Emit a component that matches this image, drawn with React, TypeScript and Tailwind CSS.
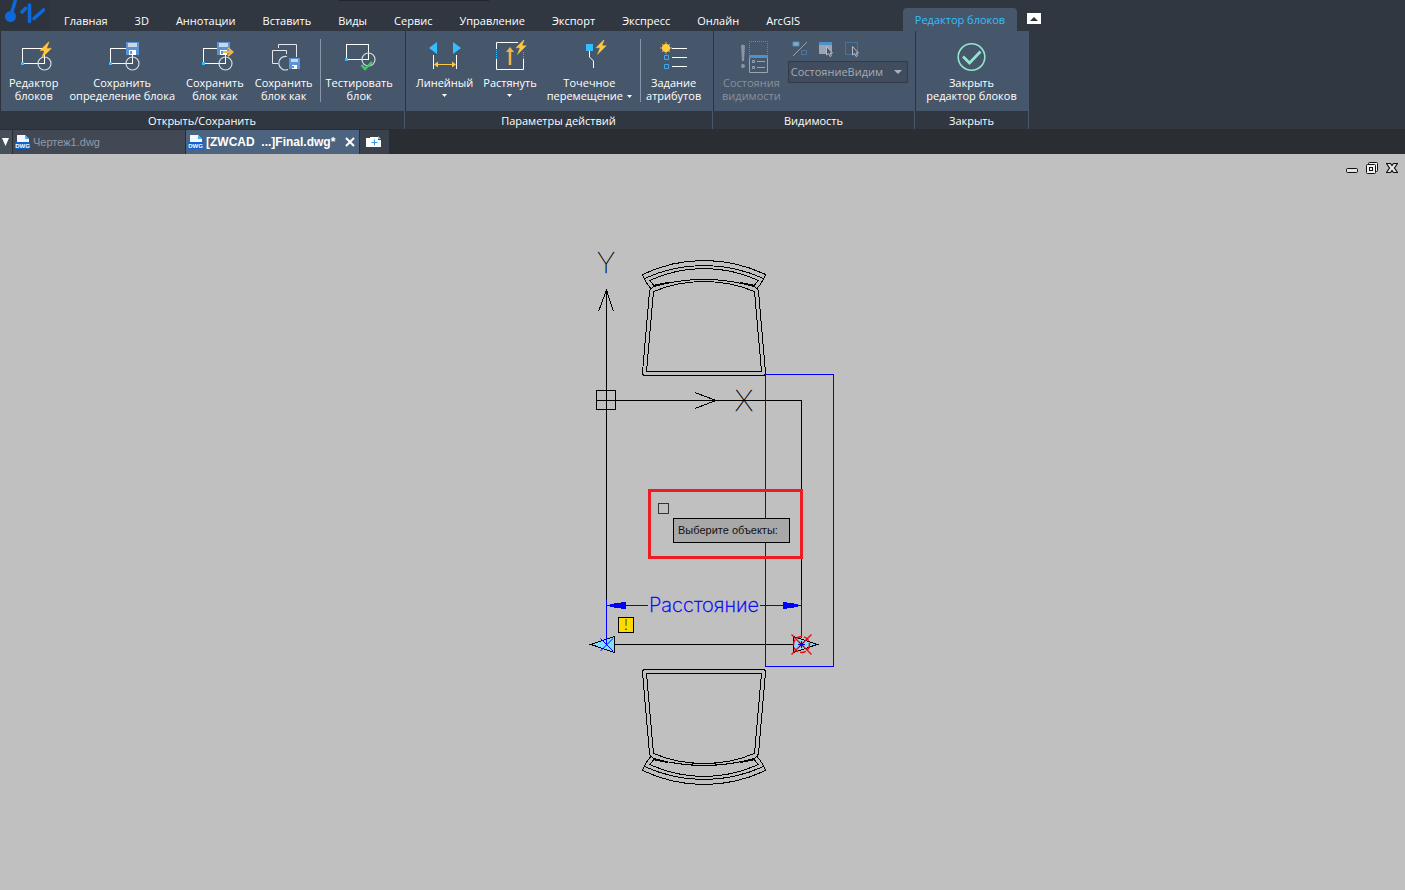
import type { ReactNode } from "react";

const menuItems = [
  "Главная",
  "3D",
  "Аннотации",
  "Вставить",
  "Виды",
  "Сервис",
  "Управление",
  "Экспорт",
  "Экспресс",
  "Онлайн",
  "ArcGIS",
];

function Icon({ children }: { children: ReactNode }) {
  return (
    <svg viewBox="0 0 40 37" className="h-[37px] w-10 shrink-0" fill="none" aria-hidden="true">
      {children}
    </svg>
  );
}

function Bolt({ x, y }: { x: number; y: number }) {
  return (
    <path
      transform={`translate(${x} ${y})`}
      d="M8.5 0 0 8.6h4.6L1.6 16 11.4 6.4H6.6L9 0Z"
      fill="#ffc83d"
      stroke="#ffc83d"
      strokeWidth=".5"
    />
  );
}

function Floppy({ x, y, size = 13 }: { x: number; y: number; size?: number }) {
  return (
    <g transform={`translate(${x} ${y}) scale(${size / 13})`} shapeRendering="crispEdges">
      <rect width="13" height="13" fill="#5b94d6" />
      <rect x="2" y="1" width="9" height="4" fill="#c9d6e6" />
      <rect x="3" y="8" width="7" height="5" fill="#fff" />
      <rect x="4" y="9" width="2" height="3" fill="#5b94d6" />
    </g>
  );
}

function BlockShape({ x, y, right }: { x: number; y: number; right: number }) {
  return (
    <>
      <path d={`M${x + 0.5} ${y + 15.5}V${y + 0.5}H${right + 0.5}V${y + 15.5}Z`} stroke="#fff" shapeRendering="crispEdges" />
      <circle cx={right + 0.5} cy={y + 15.5} r="6.5" stroke="#d5dae0" strokeWidth="1.2" />
      <rect x={x - 1} y={y + 14} width="3" height="3" fill="#36bdff" />
    </>
  );
}

function Tool({
  icon,
  label,
  disabled,
  arrow,
}: {
  icon: ReactNode;
  label: string;
  disabled?: boolean;
  arrow?: "below" | "inline";
}) {
  return (
    <button
      type="button"
      disabled={disabled}
      className={`flex flex-col items-center pt-2 text-[11px] leading-[13px] ${
        disabled ? "text-[#87909b]" : "text-white"
      }`}
    >
      <Icon>{icon}</Icon>
      <span className="whitespace-pre">
        {label}
        {arrow === "inline" && <Caret className="mb-[2px] ml-1 inline-block h-[3px] w-[5px]" />}
      </span>
      {arrow === "below" && <Caret className="mt-[5px] h-[3px] w-[5px]" />}
    </button>
  );
}

function Caret({ className }: { className: string }) {
  return (
    <svg viewBox="0 0 5 3" className={className} aria-hidden="true">
      <path d="M0 0h5L2.5 3Z" fill="currentColor" />
    </svg>
  );
}

function Divider() {
  return <span className="mt-2 h-[63px] w-px bg-[#8796a8]" />;
}

function Panel({ title, width, children }: { title: string; width: string; children: ReactNode }) {
  return (
    <section className={`flex shrink-0 flex-col ${width}`} aria-label={title}>
      <div className="flex h-20 items-start border-l border-[#2d343e] bg-[#47576b]">{children}</div>
      <h2 className="flex h-[18px] items-center justify-center border-r border-[#47576b] bg-[#313741] pt-[2px] text-[11px] text-white">
        {title}
      </h2>
    </section>
  );
}

function DwgIcon() {
  return (
    <svg viewBox="0 0 16 16" className="h-4 w-4 shrink-0" aria-hidden="true">
      <path d="M2 1h8l4 4v10H2Z" fill="#f4f8fc" />
      <path d="M10 1l4 4h-4Z" fill="#3fb4f0" />
      <rect x="0" y="8" width="15" height="7" rx="1" fill="#0f62cf" />
      <text x="7.500" y="14" textAnchor="middle" fontSize="6" fontWeight="700" fill="#fff" fontFamily="Liberation Sans, sans-serif">
        DWG
      </text>
    </svg>
  );
}

function Ribbon() {
  return (
    <div className="flex">
      <Panel title="Открыть/Сохранить" width="w-[405px]">
        <div className="flex gap-[7px] pl-2">
          <div className="flex gap-[11px]">
            <Tool
              label={"Редактор\nблоков"}
              icon={
                <>
                  <BlockShape x={8} y={9} right={30} />
                  <Bolt x={26} y={3} />
                </>
              }
            />
            <Tool
              label={"Сохранить\nопределение блока"}
              icon={
                <>
                  <BlockShape x={8} y={9} right={30} />
                  <Floppy x={24} y={3} />
                </>
              }
            />
            <Tool
              label={"Сохранить\nблок как"}
              icon={
                <>
                  <BlockShape x={8} y={9} right={30} />
                  <Floppy x={22} y={3} />
                  <path d="M28 13h9M33 9l4.500 4L33 17" stroke="#eeb54a" strokeWidth="2" />
                </>
              }
            />
            <Tool
              label={"Сохранить\nблок как"}
              icon={
                <>
                  <path d="M14.500 9V5.500H32.500V18" stroke="#e4e8ec" />
                  <path d="M22.500 15V11.500H8.500V24.500H14" stroke="#e4e8ec" />
                  <path d="M23 17.500A6.800 6.800 0 1 0 24 30.500" stroke="#d5dae0" strokeWidth="1.200" />
                  <Floppy x={25} y={19} size={11} />
                </>
              }
            />
          </div>
          <div className="flex gap-[5px]">
            <Divider />
            <Tool
              label={"Тестировать\nблок"}
              icon={
                <>
                  <BlockShape x={7} y={5} right={29} />
                  <path d="m22.500 26 3.500 4 7-7" stroke="#45c964" strokeWidth="2.400" />
                </>
              }
            />
          </div>
        </div>
      </Panel>

      <Panel title="Параметры действий" width="w-[308px]">
        <div className="flex gap-2 pl-[10px]">
          <div className="flex gap-[10px]">
            <Tool
              arrow="below"
              label="Линейный"
              icon={
                <>
                  <path d="M4 9l8-6v12ZM28 3l8 6-8 6Z" fill="#36bdff" />
                  <path d="M8.500 16v14M31.500 16v14" stroke="#fff" />
                  <path d="M11 25.500h18" stroke="#ffc83d" />
                  <path d="m9 25.500 4-3v6ZM31 25.500l-4-3v6Z" fill="#ffc83d" />
                </>
              }
            />
            <Tool
              arrow="below"
              label="Растянуть"
              icon={
                <>
                  <path d="M6.500 10V3.500H28M6.500 20v10.500h27V20" stroke="#fff" />
                  <path d="M6.500 11v9M33.500 13v7" stroke="#36bdff" strokeDasharray="1 1" />
                  <path d="M20 26V11" stroke="#eeb54a" strokeWidth="2.500" />
                  <path d="m16 13 4-5 4 5Z" fill="#eeb54a" />
                  <g transform="translate(26 1) scale(.9)">
                    <Bolt x={0} y={0} />
                  </g>
                </>
              }
            />
            <Tool
              arrow="inline"
              label={"Точечное\nперемещение"}
              icon={
                <>
                  <rect x="17" y="5" width="7" height="7" fill="#36bdff" />
                  <path d="M20.500 12v6l4 4v7" stroke="#fff" />
                  <g transform="translate(27 1) scale(.9)">
                    <Bolt x={0} y={0} />
                  </g>
                </>
              }
            />
          </div>
          <div className="flex gap-[5px]">
            <Divider />
            <Tool
              label={"Задание\nатрибутов"}
              icon={
                <>
                  <path d="M12 3v12M6 9h12M8 5l8 8M16 5l-8 8" stroke="#e9b540" />
                  <circle cx="12" cy="9" r="4" fill="#ffcf3f" />
                  <path d="M18 9.500h15M18 18.500h15M18 27.500h15" stroke="#fff" />
                  <path d="M10.500 16.500h4v4h-4ZM10.500 25.500h4v4h-4Z" stroke="#3fa9ec" />
                </>
              }
            />
          </div>
        </div>
      </Panel>

      <Panel title="Видимость" width="w-[202px]">
        <div className="flex gap-[7px] pl-2">
          <Tool
            disabled
            label={"Состояния\nвидимости"}
            icon={
              <>
                <path d="M10 6.500q2-1.500 4 0L13 22h-2Z" fill="#8795a5" />
                <circle cx="12" cy="27" r="2" fill="#8795a5" />
                <path d="M18.500 17V2.500h18V17" stroke="#4d91cc" strokeDasharray="1 1" />
                <rect x="18" y="16" width="19" height="3" fill="#4d91c8" />
                <path d="M18.500 19v14.500h18V19" stroke="#9aa5b1" />
                <path d="M21.500 21.500h2v2h-2ZM21.500 27.500h2v2h-2ZM26 22.500h8M26 28.500h8" stroke="#9aa5b1" />
              </>
            }
          />
          <div className="flex flex-col pt-2">
            <div className="flex gap-[10px] pl-1">
              <button type="button" disabled aria-label="Режим видимости">
                <svg viewBox="0 0 16 18" className="h-[18px] w-4" fill="none">
                  <path d="M1 17 15 3" stroke="#9aa5b1" />
                  <path d="M1 3h6v4H1Z" fill="#9aa5b1" stroke="#4d91c8" />
                  <path d="M9.500 11.500h5v4h-5Z" stroke="#4d91c8" strokeDasharray="1 1" />
                </svg>
              </button>
              <button type="button" disabled aria-label="Сделать видимым">
                <svg viewBox="0 0 16 18" className="h-[18px] w-4" fill="none">
                  <path d="M1 3h13v12H1Z" fill="#9aa5b1" />
                  <path d="M1 3h13v3H1Z" fill="#4d91c8" />
                  <path d="M8.500 7.500v8.500l2-1.500 1.500 3 1.500-.8-1.500-2.700h2.500Z" fill="#47576b" stroke="#b4bcc6" />
                </svg>
              </button>
              <button type="button" disabled aria-label="Сделать невидимым">
                <svg viewBox="0 0 16 18" className="h-[18px] w-4" fill="none">
                  <path d="M1.500 3.500h12v12h-12Z" stroke="#4d91c8" strokeDasharray="1 1" />
                  <path d="M8.500 7.500v8.500l2-1.500 1.500 3 1.500-.8-1.500-2.700h2.500Z" fill="#47576b" stroke="#b4bcc6" />
                </svg>
              </button>
            </div>
            <div className="mt-1 grid w-[120px] items-center">
              <select
                disabled
                aria-label="Состояние видимости"
                className="col-start-1 row-start-1 h-[22px] w-full appearance-none border border-[#323b48] bg-[#414d5e] pl-[2px] text-[11px] text-[#a3abb5] opacity-100"
              >
                <option>СостояниеВидим</option>
              </select>
              <svg viewBox="0 0 8 4" className="col-start-1 row-start-1 mr-[6px] h-1 w-2 justify-self-end" aria-hidden="true">
                <path d="M0 0h8L4 4Z" fill="#a9b1bb" />
              </svg>
            </div>
          </div>
        </div>
      </Panel>

      <Panel title="Закрыть" width="w-[114px]">
        <div className="flex grow justify-center pr-[2px]">
          <Tool
            label={"Закрыть\nредактор блоков"}
            icon={
              <>
                <circle cx="20.500" cy="18" r="13.300" stroke="#90e6cc" strokeWidth="1.600" />
                <path d="m12 17.500 6.500 6.500 11-11.500" stroke="#90e6cc" strokeWidth="2.800" />
              </>
            }
          />
        </div>
      </Panel>
    </div>
  );
}

function Chair() {
  return (
    <g>
      <path d="M642.500 274.500Q672 260.500 704 260.500T765.500 274.500Q762 283.500 757 288.500M642.500 274.500Q646 283.500 651 288.500" />
      <path d="M644.500 278.500Q673 265.500 704 265.500T763.500 278.500" />
      <path d="M654 285.500 649.500 280.500Q676 268.500 704 268.500T758.500 280.500L754 285.500" />
      <path d="M653 285.500 668 282.500M755 285.500 740 282.500" />
      <path d="M649.500 291.500Q650 288.500 654 286.500Q678 279.500 704 279.500T754 286.500Q758 288.500 758.500 291.500L765.500 372.500Q765.500 375.500 763 375.500H645Q642.500 375.500 642.500 372.500Z" />
      <path d="M653.500 291.500Q678 281.500 704 281.500T754.500 291.500L761.500 371.500H646.500Z" />
    </g>
  );
}

function Drawing() {
  return (
    <svg
      viewBox="562 244 281 546"
      className="block h-[546px] w-[281px]"
      fill="none"
      stroke="#000"
      shapeRendering="crispEdges"
      role="img"
      aria-label="Чертёж блока"
    >
      <Chair />
      <g transform="matrix(1 0 0 -1 0 1045)">
        <Chair />
      </g>

      <path d="M606.500 289V600M596.500 390.500h19v19h-19ZM596 400.500H801.500V600M598.500 311.500 606.500 290 613.500 311.500M695 392.500 716 400.500 695 408.500" />
      <g fill="#000" stroke="#000" strokeWidth=".5" fontFamily="Lato, sans-serif" fontWeight="100" fontSize="30" textAnchor="middle">
        <text x="606" y="273">Y</text>
        <text x="744" y="411">X</text>
      </g>
      <path d="M615 644.500H793" />

      <g stroke="#00f">
        <path d="M765.500 374.500h68v292h-68Z" />
        <path d="M606.500 600v38M801.500 600v38M607 605.500h41M760 605.500h41" />
        <path d="M608 605.500 614 604 625 602.500V608.500L614 607ZM800 605.500 794 604 783 602.500V608.500L794 607Z" fill="#00f" />
      </g>
      <text x="704" y="612" textAnchor="middle" fill="#00f" stroke="#00f" strokeWidth=".3" fontFamily="Inter, sans-serif" fontWeight="200" fontSize="20">
        Расстояние
      </text>

      <path d="M591 644.500 614.500 636.500V652.500Z" fill="#80dfff" />
      <path d="M817 644.500 793.500 636.500V652.500Z" fill="#80dfff" />
      <path d="M600.500 638.500 613 651M613 638.500 600.500 651M606.500 636v8" stroke="#00f" shapeRendering="auto" />
      <path d="M791.500 634.500l20 20M811.500 634.500l-20 20" stroke="#f00" strokeWidth="1.300" shapeRendering="auto" />
      <circle cx="801.500" cy="644.500" r="8" stroke="#f00" strokeWidth="1.500" strokeDasharray="6 2" shapeRendering="auto" />
      <path d="M798 644.500h7M801.500 641v7M799 642l5 5M804 642l-5 5" stroke="#00f" />

      <path d="M618.500 617.500h15v15h-15Z" fill="#ffd900" />
      <text x="626" y="630" textAnchor="middle" fill="#000" stroke="none" fontFamily="Lato, sans-serif" fontWeight="300" fontSize="15">
        !
      </text>

      <path d="M649.500 490.500h152v67h-152Z" stroke="#ed1c24" strokeWidth="3" />
      <path d="M658.500 503.500h10v10h-10Z" stroke="#333" />
    </svg>
  );
}

export default function App() {
  return (
    <div className="flex min-h-screen flex-col overflow-hidden bg-[#c0c0c0] font-['Open_Sans','Noto_Sans',sans-serif]">
      <header className="relative bg-[#313741]">
        <span className="absolute top-0 left-[339px] h-px w-[150px] bg-[#20242b]" />
        <div className="flex h-[31px] items-start">
          <div className="h-[30px] w-[50px] shrink-0 bg-[#2e343d]">
            <svg viewBox="0 0 50 30" className="h-[30px] w-[50px]" fill="none" aria-label="ZWCAD" role="img">
              <path d="M15.500 0 11 15" stroke="#0b69dc" strokeWidth="3.500" />
              <circle cx="10.500" cy="16.500" r="5.500" fill="#0b69dc" />
              <path d="m22 12 3.500-3.500M29.500 5v16.500M34 18.500 43.500 10" stroke="#0b69dc" strokeWidth="3.600" strokeLinecap="round" />
            </svg>
          </div>
          <nav className="flex gap-[27px] pt-[9px] pl-[14px] text-[11px] leading-6 whitespace-nowrap text-white">
            {menuItems.map((item) => (
              <button type="button" key={item}>
                {item}
              </button>
            ))}
          </nav>
          <div className="flex gap-[10px] pt-2 pl-[103px]">
            <button type="button" className="h-[23px] w-[114px] rounded-t-sm bg-[#47576b] pt-[2px] text-[11px] whitespace-nowrap text-[#36bdff]">
              Редактор блоков
            </button>
            <button
              type="button"
              aria-label="Свернуть ленту"
              className="mt-[5px] flex h-[11px] w-[14px] items-center justify-center bg-white text-[#333]"
            >
              <svg viewBox="0 0 8 4" className="h-1 w-2">
                <path d="M0 4h8L4 0Z" fill="currentColor" />
              </svg>
            </button>
          </div>
        </div>
        <Ribbon />
      </header>

      <div className="flex h-[25px] gap-px bg-[#2a2d32] pt-px font-['Liberation_Sans',sans-serif] text-xs">
        <button type="button" aria-label="Список чертежей" className="flex w-3 items-center bg-[#465059] pl-[2px]">
          <svg viewBox="0 0 7 8" className="h-2 w-[7px]">
            <path d="M0 0h7L3.500 8Z" fill="#fff" />
          </svg>
        </button>
        <button type="button" className="flex w-[172px] items-center gap-[2px] bg-[#424955] pl-[2px] text-[11px] text-[#929aa5]">
          <DwgIcon />
          Чертеж1.dwg
        </button>
        <div className="flex w-[173px] items-center bg-[#4d6480] pl-[2px] font-bold text-white">
          <button type="button" className="flex grow items-center gap-[2px] whitespace-nowrap">
            <DwgIcon />
            [ZWCAD &nbsp;...]Final.dwg*
          </button>
          <button type="button" aria-label="Закрыть вкладку" className="mr-1">
            <svg viewBox="0 0 10 10" className="h-[10px] w-[10px]">
              <path d="m1 1 8 8M9 1 1 9" stroke="#fff" strokeWidth="2" />
            </svg>
          </button>
        </div>
        <button type="button" aria-label="Новая вкладка" className="flex w-[29px] items-center bg-[#3b414c] pl-[6px]">
          <svg viewBox="0 0 16 12" className="h-3 w-4" fill="none">
            <path d="M0 2h4V1h8v3h3v7H0Z" fill="#fff" />
            <path d="m12 0 3 3h-3Z" fill="#8cc8ee" />
            <path d="M8.500 3.500v6M5.500 6.500h6" stroke="#2d9bea" />
          </svg>
        </button>
      </div>

      <main className="grid grow items-start">
        <div className="col-start-1 row-start-1 flex gap-2 justify-self-end pt-2 pr-[7px]">
          <button type="button" aria-label="Свернуть">
            <svg viewBox="0 0 12 12" className="h-3 w-3">
              <rect x=".5" y="6.500" width="11" height="4" rx="1" fill="#dfe4ea" stroke="#111" />
            </svg>
          </button>
          <button type="button" aria-label="Восстановить">
            <svg viewBox="0 0 12 12" className="h-3 w-3" fill="#eee" stroke="#111">
              <rect x="2.500" y=".5" width="9" height="9" rx="1" />
              <rect x=".5" y="2.500" width="9" height="9" rx="1" />
              <rect x="3.500" y="5.500" width="3" height="3" />
            </svg>
          </button>
          <button type="button" aria-label="Закрыть чертёж">
            <svg viewBox="0 0 12 12" className="h-3 w-3">
              <path d="M.5 1.500h4L6 3.500l1.500-2h4L8.500 6l3 4.500h-4L6 8.500l-1.500 2h-4l3-4.500Z" fill="#e8e8e8" stroke="#111" strokeWidth="1.200" />
            </svg>
          </button>
        </div>
        <div className="relative col-start-1 row-start-1 mt-[90px] justify-self-center">
          <Drawing />
          <div className="absolute top-[274px] left-[111px] flex h-[25px] w-[117px] items-center border border-black bg-[#a8a8a8] pl-1 font-['Liberation_Sans',sans-serif] text-[11px] whitespace-nowrap text-[#111]">
            Выберите объекты:
          </div>
        </div>
      </main>
    </div>
  );
}
